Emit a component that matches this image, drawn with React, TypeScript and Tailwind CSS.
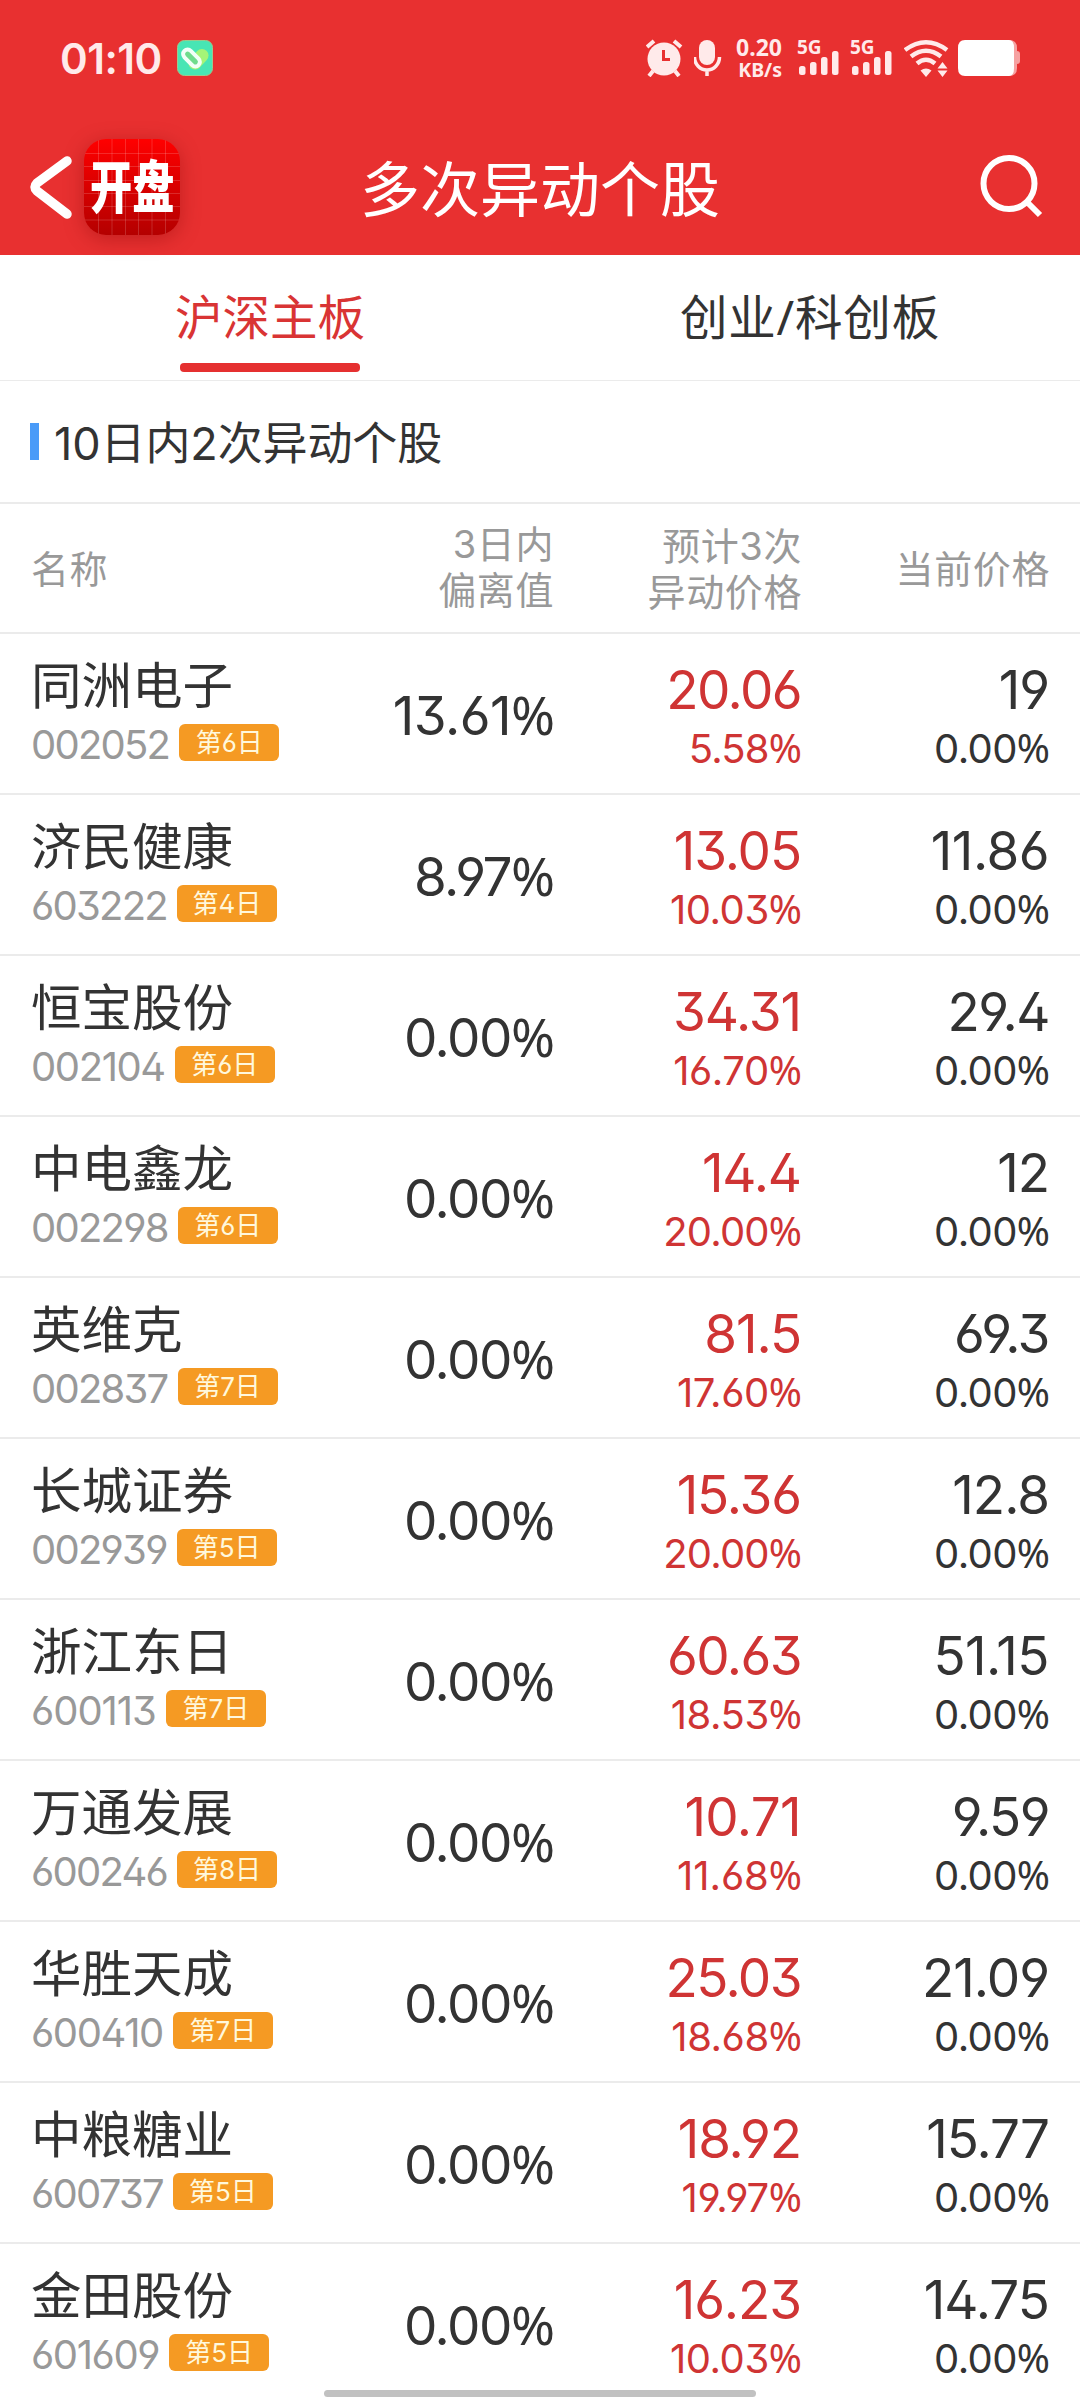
type Stock = {
    name: string
    code: string
    day: number
    deviation: string
    targetPrice: string
    targetPercent: string
    price: string
}

const stocks: Stock[] = [
    { name: '同洲电子', code: '002052', day: 6, deviation: '13.61%', targetPrice: '20.06', targetPercent: '5.58%', price: '19' },
    { name: '济民健康', code: '603222', day: 4, deviation: '8.97%', targetPrice: '13.05', targetPercent: '10.03%', price: '11.86' },
    { name: '恒宝股份', code: '002104', day: 6, deviation: '0.00%', targetPrice: '34.31', targetPercent: '16.70%', price: '29.4' },
    { name: '中电鑫龙', code: '002298', day: 6, deviation: '0.00%', targetPrice: '14.4', targetPercent: '20.00%', price: '12' },
    { name: '英维克', code: '002837', day: 7, deviation: '0.00%', targetPrice: '81.5', targetPercent: '17.60%', price: '69.3' },
    { name: '长城证券', code: '002939', day: 5, deviation: '0.00%', targetPrice: '15.36', targetPercent: '20.00%', price: '12.8' },
    { name: '浙江东日', code: '600113', day: 7, deviation: '0.00%', targetPrice: '60.63', targetPercent: '18.53%', price: '51.15' },
    { name: '万通发展', code: '600246', day: 8, deviation: '0.00%', targetPrice: '10.71', targetPercent: '11.68%', price: '9.59' },
    { name: '华胜天成', code: '600410', day: 7, deviation: '0.00%', targetPrice: '25.03', targetPercent: '18.68%', price: '21.09' },
    { name: '中粮糖业', code: '600737', day: 5, deviation: '0.00%', targetPrice: '18.92', targetPercent: '19.97%', price: '15.77' },
    { name: '金田股份', code: '601609', day: 5, deviation: '0.00%', targetPrice: '16.23', targetPercent: '10.03%', price: '14.75' },
]

type NumProps = {
    value: string
    tracking: number
}

// Every narrow 1 in the number loosens its tracking a little
function Num({ value, tracking }: NumProps) {
    const ones = value.split('1').length - 1
    const isPercent = value.endsWith('%')

    return (
        <span style={{ letterSpacing: `${tracking + ones * 0.009}em` }}>
            {isPercent ? value.slice(0, -1) : value}
            {isPercent && <span className="font-['Noto_Sans'] tracking-normal">%</span>}
        </span>
    )
}

function Signal() {
    return (
        <div className="w-[43px] h-[36px] mr-[10px]">
            <div className="h-[10px] text-[19px] leading-[17px] font-bold">5G</div>
            <svg className="ml-[2px]" width="41" height="26" fill="currentColor">
                <rect x="0" y="17" width="6.500" height="9" rx="2.500" />
                <rect x="11" y="13" width="6.500" height="13" rx="2.500" />
                <rect x="22" y="8" width="6.500" height="18" rx="2.500" />
                <rect x="33" y="2" width="6.500" height="24" rx="2.500" />
            </svg>
        </div>
    )
}

function StatusBar() {
    return (
        <div className="h-[116px] flex items-start pl-[60px] text-[#ffeaea]">
            <div className="w-[117px] mt-[38px] font-['Inter'] text-[42px] leading-[42px] font-semibold tracking-[-0.5px]">01:10</div>
            <svg className="mt-10" width="36" height="36" viewBox="0 0 36 36">
                <rect x="0.5" y="0.5" width="35" height="35" rx="7" fill="#48e5b4" stroke="#9bc98d" />
                <path d="M18 23 L25 15.500" stroke="#a5f477" strokeWidth="13" strokeLinecap="round" fill="none" />
                <rect x="4.500" y="13.500" width="20" height="9" rx="4.500" fill="#6fdc8d" stroke="#f2fff8" strokeWidth="4" transform="rotate(45 14.5 18)" />
            </svg>
            <div className="ml-[433px] mt-[39px] h-[38px] flex">
                <svg className="mr-[10px]" width="38" height="38" viewBox="0 0 38 38">
                    <circle cx="18" cy="20" r="16.5" fill="currentColor" />
                    <path d="M1 8 L8 2 M28 2 L35 8 M7 32 L3 37 M29 32 L33 37" stroke="currentColor" strokeWidth="4" fill="none" />
                    <path d="M17.500 11 V20.500 H24" stroke="#e83030" strokeWidth="3" fill="none" />
                </svg>
                <svg className="mr-[10px]" width="30" height="38" viewBox="0 0 30 38">
                    <rect x="5" y="1" width="16" height="25" rx="8" fill="currentColor" />
                    <path d="M0.500 18 A12.500 13 0 0 0 25.500 18 M13 31 V37" stroke="currentColor" strokeWidth="3.500" fill="none" />
                </svg>
                <div className="w-[48px] mr-[15px] text-right font-bold">
                    <div className="text-[23px] leading-[17px]">0.20</div>
                    <div className="mt-[4px] text-[19.500px] leading-[20px]">KB/s</div>
                </div>
                <Signal />
                <Signal />
                <svg className="ml-[1px]" width="46" height="38" viewBox="0 0 46 38" fill="none" stroke="currentColor">
                    <path d="M1 11 Q22 -4.500 43 11" strokeWidth="4.500" />
                    <path d="M7 17.500 Q22 6 37 17.500" strokeWidth="4.500" />
                    <path d="M13 24.500 Q22 17 31 24.500" strokeWidth="4.500" />
                    <path d="M16.500 31.500 Q22 27.500 27.500 31.500 L22 38 Z" fill="currentColor" stroke="none" />
                    <path d="M33.500 29.500 L38.500 23 L43.500 29.500 Z M33.500 31.500 L38.500 38 L43.500 31.500 Z" fill="currentColor" stroke="none" />
                </svg>
                <svg className="ml-[7px]" width="64" height="38" viewBox="0 0 64 38">
                    <path d="M50 1 H52 Q60 1 60 9 V12 Q63 12 63 15 V22 Q63 25 60 25 V29 Q60 37 52 37 H50 Z" fill="#f6a1a1" />
                    <path d="M8 1 H52 Q57 1 57 9 V29 Q57 37 52 37 H8 Q1 37 1 29 V9 Q1 1 8 1 Z" fill="#fff" />
                </svg>
            </div>
        </div>
    )
}

function NavBar() {
    return (
        <div className="h-[139px] flex items-start text-white">
            <svg className="ml-[26px] mt-[38px]" width="50" height="68" fill="none" stroke="currentColor">
                <path d="M41 7 L11 29 Q7 33 11 37 L41 60" strokeWidth="9.500" strokeLinecap="round" />
            </svg>
            <div className="ml-[8px] mt-[23px] size-24 rounded-[22px] overflow-hidden shadow-[0_4px_20px_rgba(120,0,0,0.35)] bg-linear-to-b from-[#ff0000] to-[#b40000] relative">
                <svg className="absolute inset-0" width="96" height="96" stroke="#fff" strokeOpacity="0.16">
                    <path d="M14.500 0V96M28 0V96M41.500 0V96M54.500 0V96M68 0V96M81.500 0V96M0 14.500H96M0 27.500H96M0 41.500H96M0 54.500H96M0 67.500H96M0 81H96" />
                </svg>
                <span className="absolute left-[6px] top-[19px] text-[57px] leading-[57px] font-black whitespace-nowrap origin-left scale-x-[0.74]">开盘</span>
            </div>
            <h1 className="w-[360px] ml-[180px] mt-[43px] text-[60px] leading-[60px] whitespace-nowrap">多次异动个股</h1>
            <svg className="ml-[257px] mt-[36px]" width="68" height="68" fill="none" stroke="currentColor" strokeWidth="6">
                <circle cx="32" cy="31.500" r="25.500" />
                <path d="M50 50 L63 63" />
            </svg>
        </div>
    )
}

export default function App() {

  return (
    <div className="w-[1080px] h-[2400px] overflow-hidden relative bg-white text-[#333333] font-['Noto_Sans','Noto_Sans_CJK_SC',sans-serif]">
        <header className="h-[255px] bg-[#e83030]">
            <StatusBar />
            <NavBar />
        </header>

        <nav className="h-[126px] border-b border-[#ebebeb] grid grid-cols-2 text-center text-[47.500px] leading-[60px]">
            <div className="pt-[32px] text-[#d93434]">
                沪深主板
                <div className="w-[180px] h-[9px] mx-auto mt-[16px] rounded-[4px] bg-[#e53030]"></div>
            </div>
            <div className="pt-[32px] tracking-[0.8px]">创业/科创板</div>
        </nav>

        <div className="h-[123px] border-b-2 border-[#ebebeb] flex items-start pl-[30px]">
            <div className="w-[9px] h-[37px] mt-[42px] bg-[#4a9bf8]"></div>
            <h2 className="ml-[15px] mt-[33px] font-['Inter','Noto_Sans_CJK_SC',sans-serif] text-[45px] leading-[60px] tracking-[-0.1px]">10日内2次异动个股</h2>
        </div>

        <div className="h-[130px] border-b-2 border-[#ebebeb] grid grid-cols-[300px_254px_248px_248px] font-['Inter','Noto_Sans_CJK_SC',sans-serif] text-[38px] leading-[46px] tracking-[0.6px] text-right text-[#999999]">
            <div className="pt-[42px] pl-[31px] text-left">名称</div>
            <div className="pt-[17px]">
                <div>3日内</div>
                <div>偏离值</div>
            </div>
            <div className="pt-[19px]">
                <div>预计3次</div>
                <div>异动价格</div>
            </div>
            <div className="pt-[42px]">当前价格</div>
        </div>

        {stocks.map(stock => (
            <div 
                key={stock.code}
                className="h-[161px] border-b-2 border-[#ebebeb] grid grid-cols-[300px_255px_247px_248px] text-right font-['Inter','Noto_Sans_CJK_SC',sans-serif] [font-feature-settings:'ss01']"
            >
                <div className="pt-[22px] pl-[31px] text-left">
                    <div className="text-[50.500px] leading-[60px]">{stock.name}</div>
                    <div className="mt-[6px] flex items-start">
                        <div className="text-[40px] leading-[46px] text-[#999999]"><Num value={stock.code} tracking={-0.044} /></div>
                        <div className="w-[100px] h-[37px] ml-[10px] mt-[2px] rounded-[6px] bg-[#f59a23] text-[#fff8dc] text-[26px] leading-[38px] text-center">{`第${stock.day}日`}</div>
                    </div>
                </div>
                <div className="pt-[51px] text-[53px] leading-[60px]"><Num value={stock.deviation} tracking={-0.028} /></div>
                <div className="pt-[26px] text-[#cf3434]">
                    <div className="pr-[1px] text-[53px] leading-[60px]"><Num value={stock.targetPrice} tracking={-0.03} /></div>
                    <div className="mt-[8px] text-[40px] leading-[40px]"><Num value={stock.targetPercent} tracking={-0.02} /></div>
                </div>
                <div className="pt-[26px]">
                    <div className="pr-[1px] text-[53px] leading-[60px]"><Num value={stock.price} tracking={-0.028} /></div>
                    <div className="mt-[8px] text-[40px] leading-[40px]"><Num value="0.00%" tracking={-0.016} /></div>
                </div>
            </div>
        ))}

        <div className="absolute left-[324px] bottom-[3px] w-[432px] h-[7px] rounded-full bg-[#c1c1c1]"></div>
    </div>
  )
}
